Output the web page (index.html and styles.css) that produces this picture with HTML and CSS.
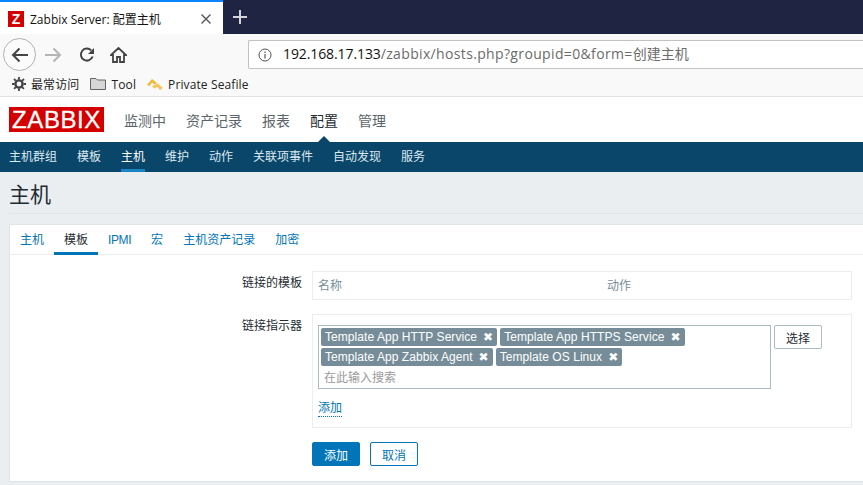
FILE: index.html
```html
<!doctype HTML>
<html>
  <head>
    <title>Zabbix Server: 配置主机</title>
    <link rel="stylesheet" href="styles.css">
  </head>
  <body>
    <div class="tabstrip">
      <div class="browser-tab">
        <span class="favicon">Z</span>
        <span class="tab-title">Zabbix Server: 配置主机</span>
        <svg class="tab-close" width="10" height="10" viewBox="0 0 10 10"><path d="M0.5 0.5L9.5 9.5M9.5 0.5L0.5 9.5" stroke="#555" stroke-width="1.4"/></svg>
      </div>
      <svg class="new-tab" width="14" height="14" viewBox="0 0 14 14"><path d="M7 0V14M0 7H14" stroke="#d4d5dc" stroke-width="2"/></svg>
    </div>
    <div class="toolbar">
      <div class="back-btn">
        <svg width="18" height="16" viewBox="0 0 18 16"><path d="M17 8H2M8.5 1.5L2 8L8.5 14.5" fill="none" stroke="#444" stroke-width="2"/></svg>
      </div>
      <svg class="forward" width="18" height="16" viewBox="0 0 18 16"><path d="M1 8H16M9.5 1.5L16 8L9.5 14.5" fill="none" stroke="#b4b4b4" stroke-width="2"/></svg>
      <svg class="reload" width="16" height="16" viewBox="0 0 16 16"><path d="M13.6 9.5A6 6 0 1 1 12.2 3.4" fill="none" stroke="#444" stroke-width="2"/><path d="M15 1V7H9Z" fill="#444"/></svg>
      <svg class="home" width="17" height="16" viewBox="0 0 17 16"><path d="M8.5 1L1 8H3V15H7V10H10V15H14V8H16Z" fill="none" stroke="#444" stroke-width="1.8"/></svg>
      <div class="urlbar">
        <svg class="info" width="14" height="14" viewBox="0 0 14 14"><circle cx="7" cy="7" r="6" fill="none" stroke="#555" stroke-width="1"/><path d="M7 6V10.5M7 3.5V5" stroke="#555" stroke-width="1.2"/></svg>
        <span class="url"><span class="url-host">192.168.17.133</span><span class="url-path">/zabbix/hosts.php?groupid=0&amp;form=</span>创建主机</span>
      </div>
    </div>
    <div class="bookmarks">
      <span class="bookmark">
        <svg width="14" height="14" viewBox="0 0 14 14"><circle cx="7" cy="7" r="3.6" fill="none" stroke="#444" stroke-width="2.4"/><path d="M7 0V14M0 7H14M2 2L12 12M12 2L2 12" stroke="#444" stroke-width="1.8" stroke-dasharray="2.4 9.2"/></svg>
        最常访问
      </span>
      <span class="bookmark">
        <svg width="16" height="14" viewBox="0 0 16 14"><path d="M0.5 12.5V1.5H6L7.5 3H15.5V12.5Z" fill="#d6d6d6" stroke="#666"/></svg>
        Tool
      </span>
      <span class="bookmark">
        <svg width="16" height="13" viewBox="0 0 16 13"><path d="M0 7L5 1L10 5L7.500 6.500L5 4.500L2.500 8Z" fill="#f2b632"/><path d="M5 8L11 5.500L16 10L13 12L10.500 9L7 10.500Z" fill="#f5c65a"/></svg>
        Private Seafile
      </span>
    </div>

    <div class="topnav">
      <div class="logo">ZABBIX</div>
      <a class="topnav-item">监测中</a>
      <a class="topnav-item">资产记录</a>
      <a class="topnav-item">报表</a>
      <a class="topnav-item topnav-active">配置</a>
      <a class="topnav-item">管理</a>
    </div>
    <div class="subnav">
      <a>主机群组</a>
      <a>模板</a>
      <a class="subnav-active">主机</a>
      <a>维护</a>
      <a>动作</a>
      <a>关联项事件</a>
      <a>自动发现</a>
      <a>服务</a>
    </div>

    <div class="page">
      <h1 class="page-title">主机</h1>
      <div class="card">
        <div class="card-tabs">
          <a>主机</a>
          <a class="card-tab-active">模板</a>
          <a class="tab-latin">IPMI</a>
          <a>宏</a>
          <a>主机资产记录</a>
          <a>加密</a>
        </div>
        <div class="form-row row-linked">
          <label>链接的模板</label>
          <div class="box linked-box">
            <span class="col-name">名称</span>
            <span>动作</span>
          </div>
        </div>
        <div class="form-row">
          <label>链接指示器</label>
          <div class="box picker-box">
            <div class="picker-line">
              <div class="multiselect">
                <span class="tag">Template App HTTP Service<i>✖</i></span>
                <span class="tag">Template App HTTPS Service<i>✖</i></span>
                <span class="tag">Template App Zabbix Agent<i>✖</i></span>
                <span class="tag">Template OS Linux<i>✖</i></span>
                <div class="placeholder">在此输入搜索</div>
              </div>
              <button class="btn-select">选择</button>
            </div>
            <a class="add-link">添加</a>
          </div>
        </div>
        <div class="actions">
          <button class="btn-primary">添加</button>
          <button class="btn-outline">取消</button>
        </div>
      </div>
    </div>
  </body>
</html>
```

FILE: styles.css
```css
html, body {
  margin: 0;
  padding: 0;
}
body {
  width: 863px;
  height: 485px;
  overflow: hidden;
  background-color: #ebeef0;
  font-family: 'Liberation Sans', 'Noto Sans CJK SC', sans-serif;
  font-size: 12px;
}
a {
  display: block;
}

/* browser chrome */
.tabstrip {
  display: flex;
  align-items: center;
  height: 34px;
  background-color: #1f2442;
}
.browser-tab {
  display: flex;
  align-items: center;
  box-sizing: border-box;
  width: 223px;
  height: 34px;
  padding: 2px 0 0 8px;
  background-color: #fff;
  border-top: 2px solid #0a84ff;
  font-family: 'Open Sans', 'Noto Sans CJK SC', sans-serif;
  font-size: 12px;
  color: #111;
}
.favicon {
  width: 16px;
  height: 16px;
  margin-right: 6px;
  background-color: #d40000;
  color: #fff;
  font: bold 14px/16px 'Liberation Sans', sans-serif;
  text-align: center;
}
.tab-title {
  flex: 1;
}
.tab-close {
  margin-right: 12px;
}
.new-tab {
  margin-left: 10px;
}
.toolbar {
  display: flex;
  align-items: center;
  height: 35px;
  padding-top: 3px;
  background-color: #f9f9f9;
}
.back-btn {
  display: flex;
  align-items: center;
  justify-content: center;
  box-sizing: border-box;
  flex: none;
  width: 33px;
  height: 33px;
  margin: 0 0 0 3px;
  background-color: #fbfbfb;
  border: 1px solid #b1b1b1;
  border-radius: 50%;
}
.forward {
  margin-left: 8px;
}
.reload {
  margin-left: 17px;
}
.home {
  margin-left: 15px;
}
.urlbar {
  display: flex;
  align-items: center;
  flex: 1;
  box-sizing: border-box;
  height: 29px;
  margin-left: 121px;
  background-color: #fff;
  border: 1px solid #c2c2c2;
  border-right: 0;
  border-radius: 2px 0 0 2px;
  font-family: 'Open Sans', 'Noto Sans CJK SC', sans-serif;
  font-size: 14px;
  color: #6b6b6b;
}
.info {
  margin: 0 11px 0 9px;
}
.url {
  margin-bottom: 3px;
}
.url-host {
  color: #111;
  letter-spacing: -0.1px;
}
.url-path {
  letter-spacing: 0.35px;
}
.bookmarks {
  display: flex;
  align-items: center;
  gap: 11px;
  height: 24px;
  padding-left: 12px;
  background-color: #f9f9f9;
  border-bottom: 1px solid #e3e3e3;
  font-family: 'Open Sans', 'Noto Sans CJK SC', sans-serif;
  font-size: 12px;
  letter-spacing: 0.12px;
  color: #222;
}
.bookmark {
  display: flex;
  align-items: center;
  gap: 5px;
}

/* zabbix header */
.topnav {
  display: flex;
  align-items: center;
  height: 45px;
  padding-left: 9px;
  background-color: #fff;
  position: relative;
}
.logo {
  width: 95px;
  height: 25px;
  margin-right: 20px;
  background-color: #d40000;
  color: #fff;
  font-size: 24px;
  line-height: 25px;
  text-align: center;
  letter-spacing: 0.6px;
  -webkit-text-stroke: 0.3px #fff;
}
.topnav-item {
  margin-right: 20px;
  font-size: 14px;
  color: #5b646a;
}
.topnav-active {
  position: relative;
  color: #1f2c33;
}
.topnav-active::after {
  content: '';
  position: absolute;
  left: 6px;
  bottom: -14px;
  border: 8px solid transparent;
  border-top: 0;
  border-bottom-color: #0a466a;
}
.subnav {
  display: flex;
  gap: 20px;
  height: 30px;
  padding-left: 9px;
  background-color: #0a466a;
  color: #dde9f0;
}
.subnav a {
  line-height: 31px;
}
.subnav a.subnav-active {
  box-sizing: border-box;
  height: 30px;
  border-bottom: 3px solid #1b84c4;
  color: #fff;
}

/* page */
.page {
  padding: 0 0 0 9px;
}
.page-title {
  box-sizing: border-box;
  height: 42px;
  margin: 0 0 10px 0;
  border-bottom: 1px solid #dfe4e7;
  font-size: 21px;
  font-weight: normal;
  line-height: 45px;
  color: #1f2c33;
}
.card {
  box-sizing: border-box;
  height: 258px;
  background-color: #fff;
  border: 1px solid #dfe4e7;
  border-width: 1px 0 1px 1px;
}
.card-tabs {
  display: flex;
  gap: 20px;
  height: 29px;
  padding-left: 10px;
  border-bottom: 1px solid #ebeef0;
  color: #0275b8;
}
.card-tabs a {
  line-height: 30px;
}
.card-tabs a.tab-latin {
  letter-spacing: -0.4px;
}
.card-tabs a.card-tab-active {
  box-sizing: border-box;
  height: 30px;
  margin: 0 -10px;
  padding: 0 10px;
  border-bottom: 3px solid #0275b8;
  color: #1f2c33;
}
.form-row {
  display: flex;
  margin-top: 14px;
}
.form-row.row-linked {
  margin-top: 16px;
}
.form-row label {
  box-sizing: border-box;
  width: 292px;
  text-align: right;
  line-height: 24px;
  color: #1f2c33;
}
.box {
  box-sizing: border-box;
  width: 540px;
  margin-left: 10px;
  border: 1px solid #ebeef0;
}
.linked-box {
  display: flex;
  height: 29px;
  padding-left: 5px;
  line-height: 29px;
  color: #768d99;
}
.col-name {
  width: 289px;
}
.picker-box {
  height: 114px;
  padding: 10px 5px 0;
}
.picker-line {
  display: flex;
  align-items: flex-start;
}
.multiselect {
  box-sizing: border-box;
  width: 453px;
  height: 64px;
  padding: 2px 0 0 2px;
  border: 1px solid #acbbc2;
  font-size: 0;
}
.tag {
  display: inline-block;
  height: 18px;
  margin: 0 3px 2px 0;
  padding: 0 4px 0 4px;
  background-color: #768d99;
  border-radius: 2px;
  color: #fff;
  font-size: 12px;
  letter-spacing: 0.06px;
  line-height: 18px;
  vertical-align: top;
}
.tag i {
  margin-left: 6px;
  font-style: normal;
  font-family: 'DejaVu Sans', sans-serif;
  font-size: 12px;
}
.placeholder {
  font-size: 12px;
  line-height: 20px;
  padding-left: 3px;
  color: #9a9a9a;
}
.btn-select {
  box-sizing: border-box;
  width: 48px;
  height: 24px;
  margin-left: 3px;
  padding: 0;
  background-color: #fff;
  border: 1px solid #acbbc2;
  border-radius: 2px;
  font: inherit;
  color: #1f2c33;
}
.add-link {
  display: inline-block;
  margin-top: 11px;
  border-bottom: 1px dotted #0275b8;
  line-height: 16px;
  color: #0275b8;
}
.actions {
  display: flex;
  gap: 10px;
  margin: 14px 0 0 302px;
}
.actions button {
  box-sizing: border-box;
  width: 48px;
  height: 24px;
  padding: 0;
  border: 1px solid #0275b8;
  border-radius: 2px;
  font: inherit;
}
.btn-primary {
  background-color: #0275b8;
  color: #fff;
}
.btn-outline {
  background-color: #fff;
  color: #0275b8;
}
```
